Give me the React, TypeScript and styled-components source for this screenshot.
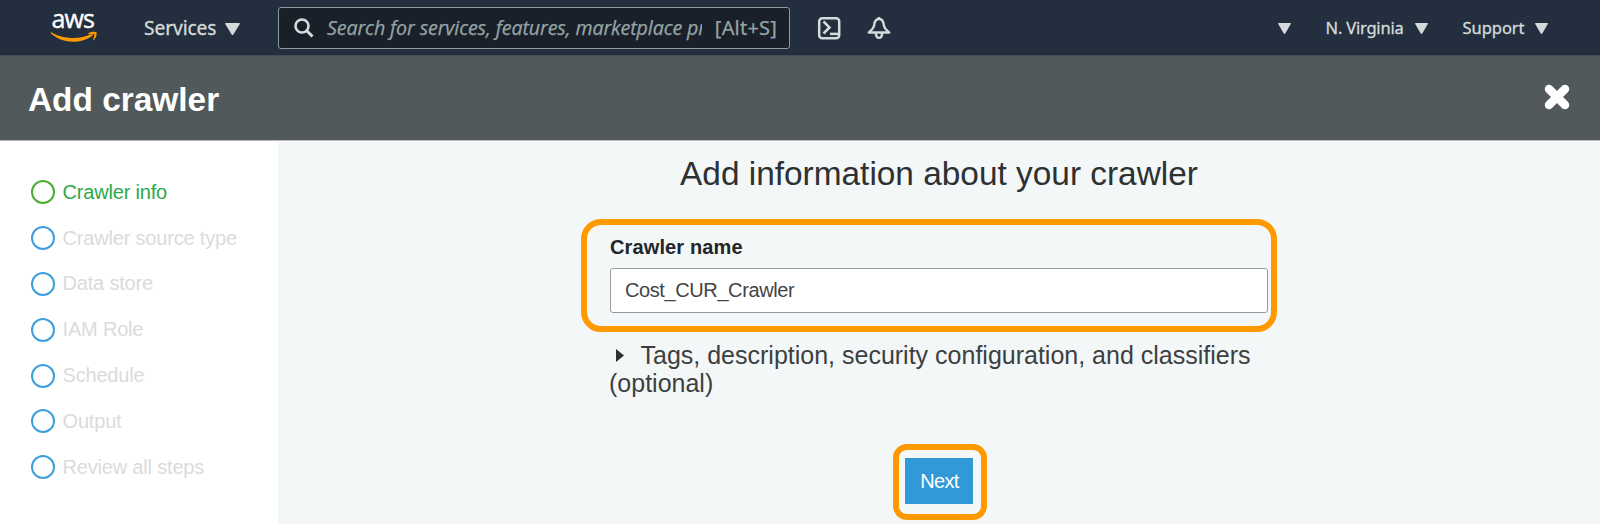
import React from 'react';
import styled, { createGlobalStyle } from 'styled-components';

const GlobalStyle = createGlobalStyle`
  *, *::before { box-sizing: border-box; }
  body {
    margin: 0;
    background: #f4f7f7;
    font-family: "Liberation Sans", Arial, sans-serif;
    color: #2f3334;
  }
`;

const Page = styled.div`
  display: flex;
  flex-direction: column;
  width: 1600px;
  height: 524px;
  overflow: hidden;
`;

const NavBar = styled.nav`
  display: flex;
  align-items: center;
  height: 55px;
  padding-left: 50px;
  background: #232f3e;
  color: #d5dbdb;
  font-family: "Noto Sans", "Open Sans", sans-serif;
`;

const Logo = styled.svg`
  display: block;
  width: 48px;
  height: 55px;
  margin-right: 46px;
`;

const MenuItem = styled.span<{ $size: number; $spacing: number; $left?: number; $gap: number }>`
  display: flex;
  align-items: center;
  gap: ${(p) => p.$gap}px;
  height: 55px;
  margin-left: ${(p) => p.$left ?? 0}px;
  font-size: ${(p) => p.$size}px;
  letter-spacing: ${(p) => p.$spacing}px;
  line-height: 57px;
  white-space: nowrap;
  -webkit-text-stroke: 0.3px #d5dbdb;
`;

const Caret = styled.svg<{ $w: number; $h: number }>`
  display: block;
  flex: none;
  width: ${(p) => p.$w}px;
  height: ${(p) => p.$h}px;
  fill: #d5dbdb;
  margin-top: 2px;
`;

const SearchBox = styled.div`
  display: flex;
  align-items: center;
  flex: none;
  width: 512px;
  height: 42px;
  margin-left: auto;
  padding: 0 12px 0 15px;
  border: 1px solid #8f9c9e;
  border-radius: 3px;
  background: #1a202a;
  color: #95a5a6;
  font-size: 20px;
  -webkit-text-stroke: 0.25px #95a5a6;
`;

const SearchHint = styled.span`
  flex: none;
  width: 375px;
  margin-left: 13px;
  overflow: hidden;
  white-space: nowrap;
  font-family: "Open Sans", sans-serif;
  font-style: italic;
  font-size: 19.6px;
  letter-spacing: -0.09px;
  line-height: 40px;
`;

const Shortcut = styled.span`
  margin-left: auto;
  white-space: nowrap;
  letter-spacing: 0.2px;
  line-height: 40px;
`;

const NavLeft = styled.div`
  display: flex;
  align-items: center;
  flex: none;
  width: 740px;
`;

const NavIcons = styled.div`
  display: flex;
  gap: 26px;
  margin-left: 27px;
`;

const NavRight = styled.div`
  display: flex;
  align-items: center;
  margin-left: auto;
  margin-right: 52px;
`;

const TitleBar = styled.header`
  display: flex;
  align-items: center;
  justify-content: space-between;
  height: 86px;
  padding: 0 30px 0 28px;
  background: #52595a;
  border-top: 1px solid #434d56;
  border-bottom: 1px solid #b5b9ba;
`;

const Title = styled.h1`
  margin: 3px 0 0;
  color: #fff;
  font-size: 33.4px;
  font-weight: bold;
  line-height: 40px;
`;

const CloseIcon = styled.svg`
  display: block;
  width: 26px;
  height: 26px;
  margin-top: -2px;
`;

const Body = styled.div`
  display: flex;
  flex: 1;
`;

const Sidebar = styled.aside`
  width: 278px;
  padding-top: 28.3px;
  background: #fff;
`;

const Step = styled.div<{ $active?: boolean }>`
  display: flex;
  align-items: center;
  gap: 7.5px;
  height: 45.85px;
  padding-left: 31px;
  color: ${(p) => (p.$active ? '#2ea84a' : '#d9dbdc')};
  font-size: 20px;
  letter-spacing: -0.18px;

  &::before {
    content: '';
    width: 24px;
    height: 24px;
    border: 2px solid ${(p) => (p.$active ? '#4bae32' : '#3d9fdc')};
    border-radius: 50%;
  }
`;

const Main = styled.main`
  flex: 1;
  border-top: 1px solid #fff;
  background: #f4f7f7;
`;

const Heading = styled.h2`
  margin: 11px 0 0;
  text-align: center;
  font-size: 33.4px;
  font-weight: normal;
  line-height: 42px;
  color: #2d3132;
`;

const Form = styled.div`
  display: flex;
  flex-direction: column;
  width: 696px;
  margin: 24px 0 0 303px;
`;

const FieldHighlight = styled.div`
  height: 113px;
  padding: 8px 3px 0 23px;
  border: 6px solid #ff9900;
  border-radius: 20px;
`;

const Label = styled.label`
  display: block;
  height: 35px;
  color: #222628;
  font-size: 20px;
  font-weight: bold;
  letter-spacing: 0.13px;
  line-height: 29px;
`;

const NameInput = styled.input`
  display: block;
  width: 658px;
  height: 45px;
  padding: 0 14px;
  border: 1.5px solid #949da0;
  border-radius: 3px;
  background: #fff;
  color: #444;
  font-family: inherit;
  font-size: 20px;
  letter-spacing: -0.4px;
`;

const Optional = styled.div`
  width: 660px;
  margin: 9px 0 0 28px;
  color: #3c4041;
  font-size: 25px;
  line-height: 28px;
`;

const Disclosure = styled.svg`
  width: 8px;
  height: 13px;
  margin: 0 16.5px 2px 7px;
  fill: #2d3132;
`;

const ButtonHighlight = styled.div`
  display: flex;
  justify-content: center;
  width: 94px;
  height: 76px;
  margin: 47px 0 0 312px;
  padding: 8px 2px 0 0;
  border: 6px solid #ff9900;
  border-radius: 14px;
`;

const NextButton = styled.button`
  width: 68px;
  height: 46px;
  padding: 0 0 0 1px;
  border: 0;
  background: #3199d7;
  color: #fff;
  font-family: inherit;
  font-size: 20px;
  letter-spacing: -0.7px;
`;

const steps = ['Crawler info', 'Crawler source type', 'Data store', 'IAM Role', 'Schedule', 'Output', 'Review all steps'];

const Down = ({ w = 13, h = 11 }: { w?: number; h?: number }) => (
  <Caret $w={w} $h={h} viewBox="0 0 12 10" preserveAspectRatio="none">
    <path d="M.5 0h11q.7 0 .3.8L6.7 9.5q-.7.9-1.4 0L.2.8Q-.1 0 .5 0z" />
  </Caret>
);

export default function App() {
  return (
    <Page>
      <GlobalStyle />
      <NavBar>
        <NavLeft>
          <Logo viewBox="0 0 48 55">
            <text x="1.5" y="28" fill="#fff" stroke="#fff" strokeWidth=".4" fontFamily="Open Sans" fontSize="25" textLength="43.5">aws</text>
            <path d="M1.2 32.2C12 38.8 29 40 41 34.3c1.5-.7 2.5.5 1.1 1.6C31 44.2 12 43.8.8 33.2Q.4 32 1.2 32.2Z" fill="#ff9900" />
            <path d="M38.5 32.9c2.5-1.6 7.3-1.5 8-.6.7 1-.3 5.8-2.7 7.6-.7.5-1 .2-.7-.5.7-1.6 1.6-4.2 1.1-4.9-.6-.7-3.7-.5-5.3-.3-.7.1-.9-.8-.4-1.3z" fill="#ff9900" />
          </Logo>
          <MenuItem $size={19.2} $spacing={-0.1} $gap={9}>Services<Down w={15} h={12} /></MenuItem>
          <SearchBox>
            <svg width="20" height="20" viewBox="0 0 20 20" fill="none" stroke="#d5dbdb" strokeWidth="2.6">
              <circle cx="8" cy="8" r="6.5" />
              <path d="M12.7 12.7L18.5 18.5" strokeWidth="3" />
            </svg>
            <SearchHint>Search for services, features, marketplace pr</SearchHint>
            <Shortcut>[Alt+S]</Shortcut>
          </SearchBox>
        </NavLeft>
        <NavIcons>
          <svg width="24" height="24" viewBox="0 0 24 24" fill="none" stroke="#d5dbdb" strokeWidth="2.5">
            <rect x="2.2" y="2.2" width="20" height="20" rx="3" />
            <path d="M6.5 5.500l6 6-6 6" />
            <path d="M13 17.9h8" />
          </svg>
          <svg width="24" height="24" viewBox="0 0 24 24" fill="none" stroke="#d5dbdb" strokeWidth="2.4" strokeLinejoin="round">
            <path d="M12 1v2M12 2.8C8.8 3.3 7.500 5.500 7.200 9c-.3 3.500-2.700 5-5.400 7.500h20.400c-2.700-2.500-5.100-4-5.400-7.500-.3-3.500-1.600-5.700-4.800-6.200z" />
            <path d="M8.9 17c0 3.300 1.1 4.900 3.100 4.900s3.100-1.600 3.100-4.900" />
          </svg>
        </NavIcons>
        <NavRight>
          <Down />
          <MenuItem $size={16.5} $spacing={-0.2} $left={35} $gap={11}>N. Virginia<Down /></MenuItem>
          <MenuItem $size={16.5} $spacing={-0.05} $left={35} $gap={10.5}>Support<Down /></MenuItem>
        </NavRight>
      </NavBar>
      <TitleBar>
        <Title>Add crawler</Title>
        <CloseIcon viewBox="0 0 26 26">
          <path d="M5 5l16 16M21 5L5 21" stroke="#fff" strokeWidth="8.5" strokeLinecap="round" />
        </CloseIcon>
      </TitleBar>
      <Body>
        <Sidebar>
          {steps.map((s, i) => (
            <Step key={s} $active={i === 0}>{s}</Step>
          ))}
        </Sidebar>
        <Main>
          <Heading>Add information about your crawler</Heading>
          <Form>
            <FieldHighlight>
              <Label htmlFor="crawler-name">Crawler name</Label>
              <NameInput id="crawler-name" defaultValue="Cost_CUR_Crawler" />
            </FieldHighlight>
            <Optional>
              <Disclosure viewBox="0 0 8 13"><path d="M0 0l8 6.5L0 13z" /></Disclosure>
              Tags, description, security configuration, and classifiers (optional)
            </Optional>
            <ButtonHighlight>
              <NextButton>Next</NextButton>
            </ButtonHighlight>
          </Form>
        </Main>
      </Body>
    </Page>
  );
}
